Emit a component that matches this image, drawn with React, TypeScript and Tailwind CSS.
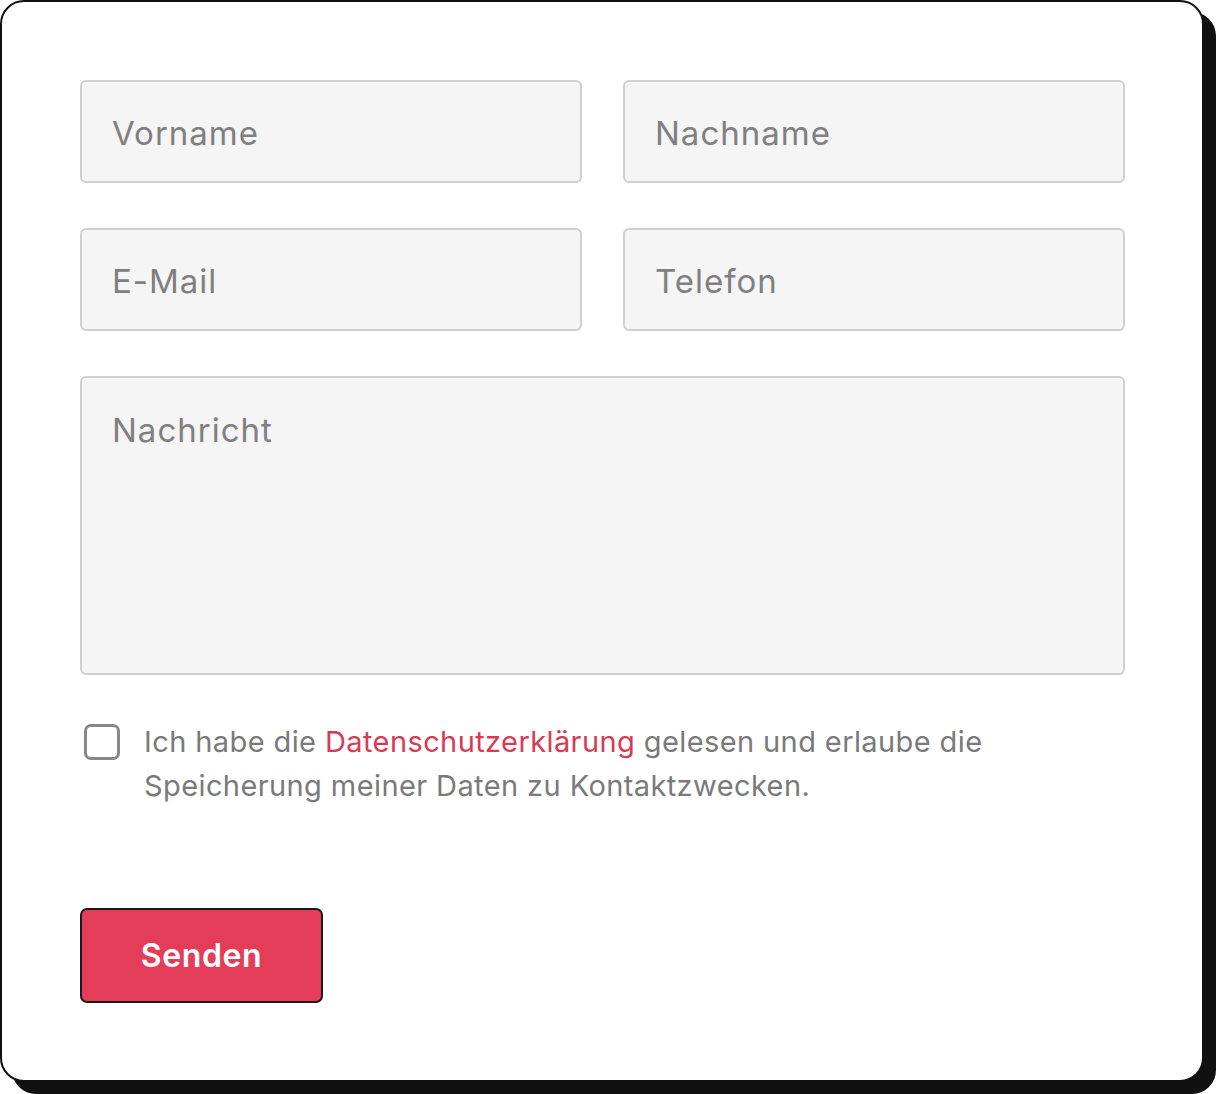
import React from "react";

const fieldClass =
	"h-[103px] w-full rounded-[6px] border-2 border-[#d0d0d0] bg-[#f5f5f5] px-[30px] pt-[3px] text-[33px] tracking-[1px] text-[#555] placeholder:text-[#808080] outline-none";

export default function App() {
	return (
		<div
			className="w-[1216px] h-[1094px] bg-white"
			style={{ fontFamily: "Inter, 'Open Sans', sans-serif" }}>
			<div className="w-[1204px] h-[1082px] rounded-[24px] border-2 border-[#111] bg-white shadow-[12px_12px_0_#111] pl-[78px] pr-[77px] pt-[78px]">
				<form className="grid grid-cols-[502px_502px] gap-x-[41px] gap-y-[45px]">
					<input className={fieldClass} placeholder="Vorname" />
					<input className={fieldClass} placeholder="Nachname" />
					<input className={fieldClass} placeholder="E-Mail" />
					<input className={fieldClass} placeholder="Telefon" />
					<textarea
						className="col-span-2 h-[299px] w-full resize-none rounded-[6px] border-2 border-[#d0d0d0] bg-[#f5f5f5] px-[30px] pt-[28px] text-[33px] leading-[48px] tracking-[1px] text-[#555] placeholder:text-[#808080] outline-none"
						placeholder="Nachricht"
					/>
				</form>

				{/* Consent */}
				<div className="mt-[49px] flex items-start gap-[24px] pl-[4px]">
					<span className="h-[36px] w-[36px] shrink-0 rounded-[7px] border-[3px] border-[#888]"></span>
					<p className="-mt-[4px] max-w-[900px] text-[29px] leading-[44px] tracking-[0.4px] text-[#7a7a7a]">
						Ich habe die{" "}
						<a href="#" className="text-[#d83a56]">
							Datenschutzerklärung
						</a>{" "}
						gelesen und erlaube die
						<br />
						Speicherung meiner Daten zu Kontaktzwecken.
					</p>
				</div>

				<button
					type="button"
					className="mt-[100px] h-[95px] w-[243px] rounded-[7px] border-2 border-[#1a1a1a] bg-[#e43d5a] text-[32px] font-semibold tracking-[0.6px] text-white">
					Senden
				</button>
			</div>
		</div>
	);
}
